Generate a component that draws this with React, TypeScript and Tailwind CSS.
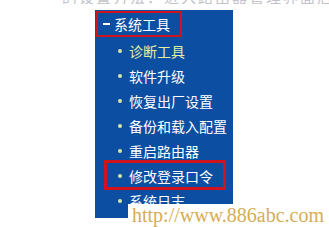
import React from "react";

const items = ["诊断工具", "软件升级", "恢复出厂设置", "备份和载入配置", "重启路由器", "修改登录口令", "系统日志"];

export default function App() {
  return (
    <div className="relative w-[329px] h-[227px] overflow-hidden bg-white" style={{ fontFamily: '"Noto Sans CJK SC", sans-serif' }}>
      <div className="h-[10px]">
        <div className="h-[4px] overflow-hidden flex flex-col justify-end">
          <div className="shrink-0 h-[15px] pl-[62px] text-[15px] leading-[15px] text-[#c4c4cc] whitespace-nowrap tracking-[2px]">
            的设置方法：进入路由器管理界面后，点击系统工具
          </div>
        </div>
      </div>
      <div className="ml-[95px] w-[138px] h-[208px] bg-[#0c4ea2] pt-[1px]">
        <div className="ml-[1px] w-[86px] h-[26px] border-2 border-[#d0141f] flex items-center">
          <span className="ml-[5px] w-[7px] h-[2px] bg-white" />
          <span className="ml-[4px] text-[14px] leading-none text-white">系统工具</span>
        </div>
        <div className="mt-[1px]">
          {items.map((t, i) => (
            <div key={t} className="relative h-[25px] flex items-center">
              {i === 5 && (
                <span className="absolute left-[9px] top-[-3px] w-[122px] h-[30px] border-[3px] border-[#d0141f]" />
              )}
              <span className="ml-[23px] w-[4px] h-[4px] rounded-full bg-[#d8e6a4]" />
              <span className={`ml-[7px] text-[14px] leading-none ${i === 0 ? "text-[#e4eea0]" : "text-white"}`}>{t}</span>
            </div>
          ))}
        </div>
      </div>
      <div
        className="absolute left-[128px] top-[204px] w-[201px] h-[23px] bg-white pl-[4px] text-[20px] leading-[23px] text-[#d6ad55] whitespace-nowrap"
        style={{ fontFamily: '"Liberation Serif", serif' }}
      >
        http://www.886abc.com
      </div>
    </div>
  );
}
